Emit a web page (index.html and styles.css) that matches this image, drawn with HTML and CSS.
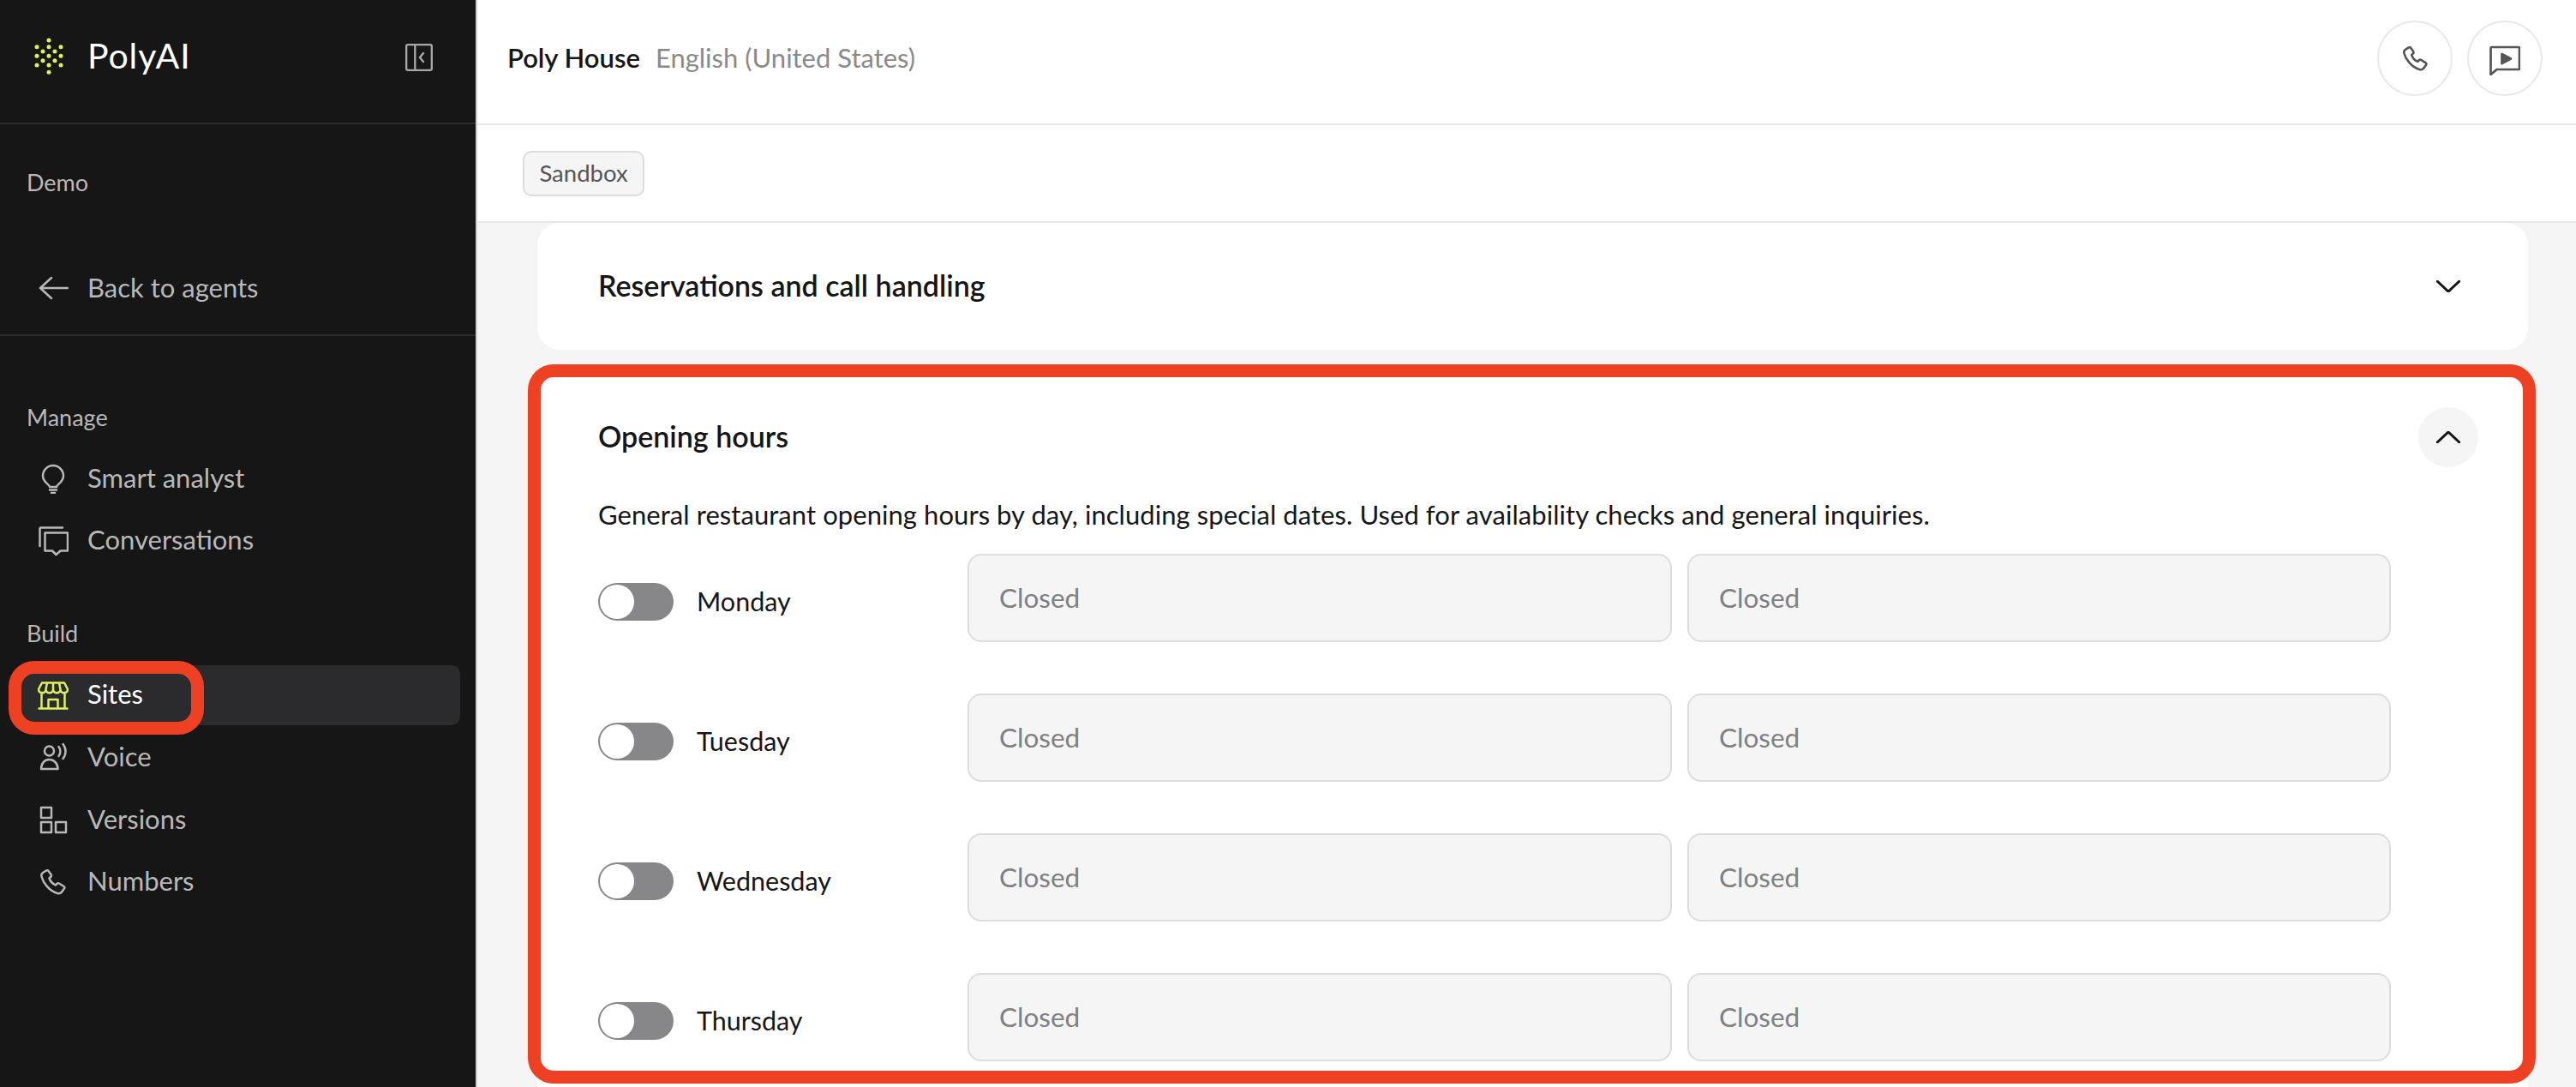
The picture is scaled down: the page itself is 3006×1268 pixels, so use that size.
FILE: index.html
```html
<!DOCTYPE html>
<html lang="en">
<head>
<meta charset="utf-8">
<title>PolyAI – Sites</title>
<link rel="stylesheet" href="styles.css">
</head>
<body>
<div class="app">
  <aside class="sidebar">
    <div class="side-head">
      <svg class="logo" viewBox="0 0 40 46" aria-hidden="true">
        <g class="logo-dots">
          <circle cx="20" cy="3" r="2.5"/><circle cx="6" cy="10.700" r="2.5"/><circle cx="20" cy="10.700" r="2.500"/><circle cx="34" cy="10.700" r="2.500"/>
          <circle cx="13" cy="16" r="2.500"/><circle cx="27" cy="16" r="2.500"/><circle cx="6" cy="21.300" r="2.500"/><circle cx="20" cy="21.300" r="2.500"/>
          <circle cx="34" cy="21.300" r="2.500"/><circle cx="13" cy="26.700" r="2.500"/><circle cx="27" cy="26.700" r="2.500"/><circle cx="6" cy="32" r="2.500"/>
          <circle cx="20" cy="32" r="2.500"/><circle cx="34" cy="32" r="2.500"/><circle cx="20" cy="40.300" r="2.500"/>
        </g>
      </svg>
      <span class="brand">PolyAI</span>
      <svg class="collapse" viewBox="0 0 34 34" aria-hidden="true">
        <rect x="1.250" y="1.250" width="31.500" height="31.500" rx="2"/><path d="M12 1.500V32.500M23 11L18 17L23 23"/>
      </svg>
    </div>
    <div class="side-agent">
      <div class="side-label">Demo</div>
      <a class="back"><svg class="ico" viewBox="0 0 36 36" aria-hidden="true"><path d="M35 18H3M16 6L3 18L16 30"/></svg><span>Back to agents</span></a>
    </div>
    <nav class="side-nav">
      <div class="side-label nav-label">Manage</div>
      <div class="nav-list">
        <a class="nav-item"><svg class="ico" viewBox="0 0 36 36" aria-hidden="true"><path d="M14 28C14 25 6 23 6 15A12 12 0 1 1 30 15C30 23 22 25 22 28ZM14 31.500H22M16 35H20"/></svg><span>Smart analyst</span></a>
        <a class="nav-item"><svg class="ico" viewBox="0 0 36 36" aria-hidden="true"><path d="M2.500 24V4A1.500 1.500 0 0 1 4 2.500H29M8.500 8.500H35V29.500H26.500L21.500 34L17 29.500H8.500Z"/></svg><span>Conversations</span></a>
      </div>
      <div class="side-label nav-label build">Build</div>
      <div class="nav-list">
        <a class="nav-item active"><svg class="ico" viewBox="0 0 36 36" aria-hidden="true"><path d="M5 3.500H31L35 11A4.250 4.250 0 0 1 26.500 11A4.250 4.250 0 0 1 18 11A4.250 4.250 0 0 1 9.500 11A4.250 4.250 0 0 1 1 11ZM11 3.500L9.500 11M18 3.500V11M25 3.500L26.500 11M4.500 15V33.500M31.500 15V33.500M1.500 33.500H34.500M12.500 33.500V23H23.500V33.500"/></svg><span>Sites</span></a>
        <a class="nav-item"><svg class="ico" viewBox="0 0 36 36" aria-hidden="true"><circle cx="13.500" cy="11" r="5.500"/><path d="M4 32C4 25.500 8 21 13.500 21C19 21 23.500 25.500 23.500 32ZM24.500 6C27 9 27 14 24.500 17M29.500 3C33.500 8 33.500 15 29.500 20"/></svg><span>Voice</span></a>
        <a class="nav-item"><svg class="ico" viewBox="0 0 36 36" aria-hidden="true"><path d="M4 4H16V16H4ZM4 21H16V33H4ZM21 21H33V33H21Z"/></svg><span>Versions</span></a>
        <a class="nav-item"><svg class="ico" viewBox="-3 -3 36 36" aria-hidden="true"><path d="M7 1.500L3 4C1.500 5 1 6.500 1.500 8.500C3 15 10 25 20 28C22 28.500 24 28 25 26.500L28 22.500C28.500 21.500 28.300 20.500 27.500 20L22 16.500C21 16 20 16.200 19.300 17L18 18.500C14 17 11.500 13.500 10.500 10.500L12.500 8.500C13 7.800 13 7 12.500 6L9.500 2C9 1.200 8 1 7 1.500Z"/></svg><span>Numbers</span></a>
      </div>
    </nav>
  </aside>
  <main class="main">
    <header class="topbar">
      <span class="agent-name">Poly House</span>
      <span class="agent-lang">English (United States)</span>
      <div class="top-actions">
        <button class="round"><svg class="round-ico" viewBox="0 0 30 30" aria-hidden="true"><path d="M7 1.500L3 4C1.500 5 1 6.500 1.500 8.500C3 15 10 25 20 28C22 28.500 24 28 25 26.500L28 22.500C28.500 21.500 28.300 20.500 27.500 20L22 16.500C21 16 20 16.200 19.300 17L18 18.500C14 17 11.500 13.500 10.500 10.500L12.500 8.500C13 7.800 13 7 12.500 6L9.500 2C9 1.200 8 1 7 1.500Z"/></svg></button>
        <button class="round"><svg class="round-ico chat" viewBox="0 0 36 36" aria-hidden="true"><path d="M1.500 35V4A1 1 0 0 1 2.500 3H34A1 1 0 0 1 35 4V28A1 1 0 0 1 34 29H8.500Z"/><path class="solid" d="M14.500 11L25 16.500L14.500 22Z"/></svg></button>
      </div>
    </header>
    <div class="subbar"><span class="tag">Sandbox</span></div>
    <section class="content">
      <article class="card card-closed">
        <h2 class="card-title">Reservations and call handling</h2>
        <svg class="chev" viewBox="0 0 28 14" aria-hidden="true"><path d="M1 1L14 13L27 1"/></svg>
      </article>
      <article class="card card-open">
        <div class="card-head">
          <h2 class="card-title">Opening hours</h2>
          <span class="chev-btn"><svg class="chev" viewBox="0 0 28 14" aria-hidden="true"><path d="M1 13L14 1L27 13"/></svg></span>
        </div>
        <p class="card-desc">General restaurant opening hours by day, including special dates. Used for availability checks and general inquiries.</p>
        <div class="rows">
          <div class="row"><div class="day"><span class="toggle"><i class="knob"></i></span><span class="day-name">Monday</span></div><div class="field">Closed</div><div class="field">Closed</div></div>
          <div class="row"><div class="day"><span class="toggle"><i class="knob"></i></span><span class="day-name">Tuesday</span></div><div class="field">Closed</div><div class="field">Closed</div></div>
          <div class="row"><div class="day"><span class="toggle"><i class="knob"></i></span><span class="day-name">Wednesday</span></div><div class="field">Closed</div><div class="field">Closed</div></div>
          <div class="row"><div class="day"><span class="toggle"><i class="knob"></i></span><span class="day-name">Thursday</span></div><div class="field">Closed</div><div class="field">Closed</div></div>
        </div>
      </article>
    </section>
  </main>
  <div class="mark mark-nav"></div>
  <div class="mark mark-card"></div>
</div>
</body>
</html>
```
FILE: styles.css
```css
* { box-sizing: border-box; }
html, body { margin: 0; padding: 0; }
body { font-family: "Lato", "Liberation Sans", sans-serif; background: #f5f5f5; color: #161616; }
.app { position: relative; display: flex; width: 3006px; height: 1268px; overflow: hidden; }

/* Sidebar */
.sidebar { width: 557px; flex: none; background: #161616; border-right: 2px solid #d0d0d0; color: #b8b8b8; }
.side-head { height: 145px; border-bottom: 2px solid #2b2b2b; display: flex; align-items: center; padding: 0 50px 10px 37px; }
.logo { width: 40px; height: 46px; flex: none; }
.logo-dots { fill: #dff05a; }
.brand { margin-left: 25px; padding-bottom: 4px; color: #fff; font-size: 41px; line-height: 46px; letter-spacing: 0.9px; }
.collapse { width: 32px; height: 32px; margin-left: auto; fill: none; stroke: #a8a8a8; stroke-width: 2.500; }
.side-agent { height: 247px; border-bottom: 2px solid #2b2b2b; padding-top: 52px; }
.side-label { padding-left: 31px; font-size: 27px; line-height: 32px; color: #b8b8b8; }
.back { display: flex; align-items: center; gap: 22px; height: 72px; margin-top: 71px; padding-left: 44px; font-size: 31px; }
.back span, .nav-item span { padding-bottom: 3px; }
.side-nav { padding-top: 79px; }
.nav-label { margin-bottom: 20px; }
.nav-label.build { margin-top: 57px; margin-bottom: 21px; }
.nav-list { display: flex; flex-direction: column; gap: 2.700px; }
.nav-item { display: flex; align-items: center; gap: 22px; width: 521px; height: 70px; margin-left: 16px; padding-left: 28px; border-radius: 10px; font-size: 31px; }
.nav-item.active { background: #2b2b2d; color: #fff; }
.ico { width: 36px; height: 36px; flex: none; fill: none; stroke: #b8b8b8; stroke-width: 2.500; stroke-linejoin: round; stroke-linecap: round; }
.active .ico { stroke: #dff05a; }

/* Main column */
.main { flex: 1; display: flex; flex-direction: column; min-width: 0; }
.topbar { height: 146px; flex: none; background: #fff; border-bottom: 2px solid #e8e8e8; display: flex; align-items: center; padding: 0 39px 8px 35px; }
.agent-name { font-size: 31px; font-weight: 600; color: #161616; padding-bottom: 2px; }
.agent-lang { margin-left: 18px; font-size: 31px; color: #8a8a8a; padding-bottom: 2px; }
.top-actions { margin-left: auto; display: flex; gap: 17px; }
.round { width: 88px; height: 88px; padding: 0; border: 2px solid #e8e8e8; border-radius: 50%; background: #fff; display: flex; align-items: center; justify-content: center; }
.round-ico { width: 29px; height: 29px; fill: none; stroke: #555; stroke-width: 2.700; stroke-linejoin: round; }
.round-ico.chat { width: 36px; height: 36px; margin-top: 4px; }
.solid { fill: #555; }
.subbar { height: 114px; flex: none; background: #fff; border-bottom: 2px solid #e8e8e8; display: flex; align-items: center; padding-left: 53px; }
.tag { height: 53px; width: 142px; display: flex; align-items: center; justify-content: center; padding-bottom: 2px; background: #f5f5f5; border: 2px solid #ddd; border-radius: 10px; font-size: 27.500px; color: #555; }

/* Cards */
.content { flex: 1; min-height: 0; overflow: hidden; padding: 0 56px 0 70px; }
.card { background: #fff; border-radius: 26px; padding: 0 71px; }
.card-closed { height: 148px; display: flex; align-items: center; justify-content: space-between; margin-bottom: 25px; padding-right: 79px; }
.card-title { margin: 0; padding-bottom: 4px; font-size: 34px; font-weight: 600; color: #161616; }
.chev { width: 28px; height: 14px; fill: none; stroke: #161616; stroke-width: 3; stroke-linecap: round; stroke-linejoin: round; }
.card-open { padding-top: 42px; padding-bottom: 60px; }
.card-head { display: flex; align-items: center; justify-content: space-between; height: 70px; margin-right: -13px; }
.chev-btn { width: 70px; height: 70px; border-radius: 50%; background: #f5f5f5; display: flex; align-items: center; justify-content: center; }
.card-desc { margin: 37px 0 0; font-size: 31px; line-height: 36px; letter-spacing: 0.06px; color: #161616; }
.rows { margin-top: 28px; display: flex; flex-direction: column; gap: 60px; }
.row { display: grid; grid-template-columns: 431px 822px 839px; }
.day { display: flex; align-items: center; gap: 27px; padding-top: 8px; }
.toggle { display: block; width: 88px; height: 44px; border-radius: 22px; background: #87878a; padding: 2px; }
.knob { display: block; width: 40px; height: 40px; border-radius: 50%; background: #fff; }
.day-name { margin-top: -2px; font-size: 30.500px; color: #161616; }
.field { height: 103px; display: flex; align-items: center; padding-left: 35px; padding-bottom: 2px; background: #f5f5f5; border: 2px solid #ddd; border-radius: 16px; font-size: 31.500px; color: #808080; }
.field + .field { margin-left: 18px; }

/* Annotation overlays */
.mark { position: absolute; border: 15px solid #ee4023; border-radius: 30px; pointer-events: none; }
.mark-nav { left: 10px; top: 771px; width: 228px; height: 86px; }
.mark-card { left: 616px; top: 425px; width: 2343px; height: 839px; }
```
